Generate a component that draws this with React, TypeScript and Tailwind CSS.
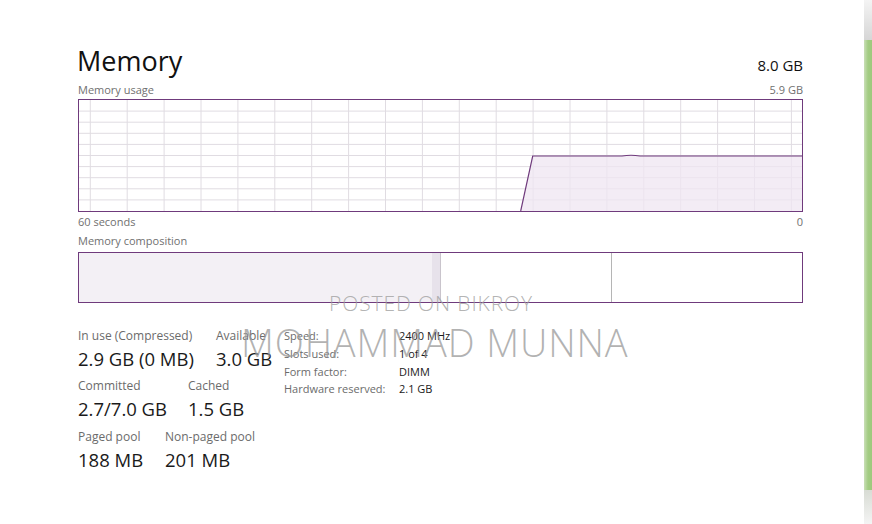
import React from "react";

const PURPLE = "#6f3a7c";
const GRID = "#e0dce2";

function UsageGraph() {
  const cols = Array.from({ length: 20 }, (_, k) => 11.3 + k * 36.9);
  const rows = Array.from({ length: 9 }, (_, i) => (i + 1) * 11.1);
  return (
    <svg width="723" height="111" className="block">
      {cols.map((x) => (
        <line key={"v" + x} x1={x} y1={0} x2={x} y2={111} stroke={GRID} strokeWidth={1} />
      ))}
      {rows.map((y) => (
        <line key={"h" + y} x1={0} y1={y} x2={723} y2={y} stroke={GRID} strokeWidth={1} />
      ))}
      <path d="M441.7 111 L453.7 56 L543 56 Q552 54.5 561 56 L723 56 L723 111 Z" fill="#efe6f2" fillOpacity={0.75} />
      <path d="M441.7 111 L453.7 56 L543 56 Q552 54.5 561 56 L723 56" fill="none" stroke={PURPLE} strokeWidth={1.2} />
    </svg>
  );
}

function Stat({ label, value, width }: { label: string; value: string; width?: string }) {
  return (
    <div className={width}>
      <div className="h-[16px] text-[12px] leading-[16px] text-[#6b6b6b] whitespace-nowrap">{label}</div>
      <div className="mt-[3px] h-[24px] text-[18.5px] leading-[24px] text-[#1a1a1a] whitespace-nowrap">{value}</div>
    </div>
  );
}

const info = [
  ["Speed:", "2400 MHz"],
  ["Slots used:", "1 of 4"],
  ["Form factor:", "DIMM"],
  ["Hardware reserved:", "2.1 GB"],
];

export default function App() {
  return (
    <div
      className="relative flex w-[872px] h-[524px] overflow-hidden bg-white"
      style={{ fontFamily: '"Open Sans", "Noto Sans", sans-serif' }}
    >
      <div className="flex-1 pl-[78px] pr-[61px] pt-[44px]">
        <div className="flex h-[34px] items-baseline justify-between">
          <div className="text-[27px] leading-[34px] text-[#111] -ml-[1px]">Memory</div>
          <div className="text-[15px] leading-[34px] text-[#111]">8.0 GB</div>
        </div>
        <div className="mt-[5px] flex h-[14px] justify-between text-[11px] leading-[14px] text-[#707070]">
          <span>Memory usage</span>
          <span>5.9 GB</span>
        </div>
        <div className="mt-[2px] h-[113px] border border-[#6f3a7c]">
          <UsageGraph />
        </div>
        <div className="mt-[3px] flex h-[14px] justify-between text-[11px] leading-[14px] text-[#707070]">
          <span>60 seconds</span>
          <span>0</span>
        </div>
        <div className="mt-[5px] h-[14px] text-[11px] leading-[14px] text-[#707070]">Memory composition</div>
        <div className="mt-[4px] flex h-[51px] border border-[#6f3a7c]">
          <div className="w-[353px] bg-[#f3f0f5]" />
          <div className="w-[9px] bg-[#e7e2eb] border-r border-[#c9c4cc]" />
          <div className="w-[171px] border-r border-[#b5b5b5]" />
          <div className="flex-1" />
        </div>

        <div className="mt-[25px] flex">
          <div className="w-[206px]">
            <div className="flex">
              <Stat label="In use (Compressed)" value="2.9 GB (0 MB)" width="w-[138px]" />
              <Stat label="Available" value="3.0 GB" />
            </div>
            <div className="mt-[7px] flex">
              <Stat label="Committed" value="2.7/7.0 GB" width="w-[110px]" />
              <Stat label="Cached" value="1.5 GB" />
            </div>
            <div className="mt-[8px] flex">
              <Stat label="Paged pool" value="188 MB" width="w-[87px]" />
              <Stat label="Non-paged pool" value="201 MB" />
            </div>
          </div>
          <div className="-mt-[1px] text-[11px] leading-[17.8px]">
            {info.map(([k, v]) => (
              <div key={k} className="flex">
                <span className="w-[115px] text-[#6b6b6b]">{k}</span>
                <span className="text-[#1a1a1a]">{v}</span>
              </div>
            ))}
          </div>
        </div>
      </div>

      <div className="flex w-[8px] flex-col">
        <div className="h-[40px] bg-gradient-to-b from-[#f4f4f4] to-[#d6d6d6]" />
        <div className="flex-1 bg-gradient-to-r from-[#c9dfb6] via-[#a3cc83] to-[#9dc97c]" />
        <div className="h-[34px] bg-gradient-to-b from-[#d8dcd4] to-[#f4f4f4]" />
      </div>

      <div className="pointer-events-none absolute left-[329px] top-[289px] text-[21px] leading-[28px] font-light tracking-[0.9px] text-[#a0a0a0]/80 whitespace-nowrap">
        POSTED ON BIKROY
      </div>
      <div className="pointer-events-none absolute left-[241px] top-[317px] text-[38px] leading-[50px] font-light tracking-[0.9px] text-[#999999]/75 whitespace-nowrap">
        MOHAMMAD MUNNA
      </div>
    </div>
  );
}
